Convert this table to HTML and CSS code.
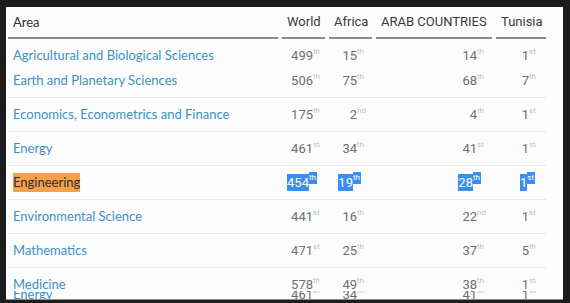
FILE: index.html
```html
<!DOCTYPE html>
<html>
<head>
<meta charset="utf-8">
<link rel="stylesheet" href="styles.css">
</head>
<body>
<div class="panel">
  <div class="row head">
    <div class="cell area">Area</div>
    <div class="cell">World</div>
    <div class="cell">Africa</div>
    <div class="cell">ARAB COUNTRIES</div>
    <div class="cell">Tunisia</div>
  </div>

  <div class="row">
    <div class="cell area"><a>Agricultural and Biological Sciences</a><a>Earth and Planetary Sciences</a></div>
    <div class="cell num c-w"><div>499<sup>th</sup></div><div>506<sup>th</sup></div></div>
    <div class="cell num c-a"><div>15<sup>th</sup></div><div>75<sup>th</sup></div></div>
    <div class="cell num c-r"><div>14<sup>th</sup></div><div>68<sup>th</sup></div></div>
    <div class="cell num c-t"><div>1<sup>st</sup></div><div>7<sup>th</sup></div></div>
  </div>

  <div class="row">
    <div class="cell area"><a>Economics, Econometrics and Finance</a></div>
    <div class="cell num c-w"><div>175<sup>th</sup></div></div>
    <div class="cell num c-a"><div>2<sup>nd</sup></div></div>
    <div class="cell num c-r"><div>4<sup>th</sup></div></div>
    <div class="cell num c-t"><div>1<sup>st</sup></div></div>
  </div>

  <div class="row">
    <div class="cell area"><a>Energy</a></div>
    <div class="cell num c-w"><div>461<sup>st</sup></div></div>
    <div class="cell num c-a"><div>34<sup>th</sup></div></div>
    <div class="cell num c-r"><div>41<sup>st</sup></div></div>
    <div class="cell num c-t"><div>1<sup>st</sup></div></div>
  </div>

  <div class="row">
    <div class="cell area"><a><mark class="hl-orange">Engineering</mark></a></div>
    <div class="cell num c-w"><div><span class="sel">454</span><sup class="sel">th</sup></div></div>
    <div class="cell num c-a"><div><span class="sel">19</span><sup class="sel">th</sup></div></div>
    <div class="cell num c-r"><div><span class="sel">28</span><sup class="sel">th</sup></div></div>
    <div class="cell num c-t"><div><span class="sel">1</span><sup class="sel">st</sup></div></div>
  </div>

  <div class="row">
    <div class="cell area"><a>Environmental Science</a></div>
    <div class="cell num c-w"><div>441<sup>st</sup></div></div>
    <div class="cell num c-a"><div>16<sup>th</sup></div></div>
    <div class="cell num c-r"><div>22<sup>nd</sup></div></div>
    <div class="cell num c-t"><div>1<sup>st</sup></div></div>
  </div>

  <div class="row">
    <div class="cell area"><a>Mathematics</a></div>
    <div class="cell num c-w"><div>471<sup>st</sup></div></div>
    <div class="cell num c-a"><div>25<sup>th</sup></div></div>
    <div class="cell num c-r"><div>37<sup>th</sup></div></div>
    <div class="cell num c-t"><div>5<sup>th</sup></div></div>
  </div>

  <div class="row last">
    <div class="cell area"><a class="front">Medicine</a><a class="ghost">Energy</a></div>
    <div class="cell num c-w"><div class="front">578<sup>th</sup></div><div class="ghost">461<sup>st</sup></div></div>
    <div class="cell num c-a"><div class="front">49<sup>th</sup></div><div class="ghost">34<sup>th</sup></div></div>
    <div class="cell num c-r"><div class="front">38<sup>th</sup></div><div class="ghost">41<sup>st</sup></div></div>
    <div class="cell num c-t"><div class="front">1<sup>st</sup></div><div class="ghost">1<sup>st</sup></div></div>
  </div>
</div>
</body>
</html>
```

FILE: styles.css
```css
html, body {
  margin: 0;
  padding: 0;
  background: #1d1d1d;
  width: 570px;
  height: 303px;
  overflow: hidden;
}

.panel {
  margin: 7px 7px 0 6px;
  height: 292px;
  border-bottom: 1px solid #8d8d8d;
  background: #fcfcfc;
  padding-left: 2px;
  overflow: hidden;
  font-family: Roboto, "Liberation Sans", sans-serif;
}

.row {
  display: grid;
  grid-template-columns: 270px 43px 43px 116px 50px;
  column-gap: 4px;
  width: 538px;
  padding: 4px 0;
  border-bottom: 1px solid #e8e8e8;
}

.row.head {
  padding: 0;
  border-bottom: none;
}

.row.head .cell {
  height: 30px;
  line-height: 30px;
  border-bottom: 2px solid #8c8c8c;
  padding-left: 5px;
  font-size: 13px;
  color: #3a3a3a;
  white-space: nowrap;
}

.row.head .cell.area {
  font-family: Lato, "Open Sans", sans-serif;
  color: #2e2e2e;
}

.cell.area {
  padding-left: 5px;
  display: flex;
  flex-direction: column;
}

.cell.area a {
  font-family: Lato, "Open Sans", sans-serif;
  font-size: 13px;
  line-height: 25px;
  color: #3b91c6;
  white-space: nowrap;
}

.hl-orange {
  background: #f5a04c;
  color: #2c2c2c;
  padding: 1px 0 2px;
}

.num {
  text-align: right;
  font-size: 13px;
  color: #6e6e6e;
  line-height: 25px;
}

.num sup {
  display: inline-block;
  width: 12px;
  text-align: left;
  font-size: 8px;
  line-height: 10px;
  vertical-align: 6px;
  color: #c2c2c2;
}

.c-w { padding-right: 0; }
.c-a { padding-right: 3px; }
.c-r { padding-right: 3px; }
.c-t { padding-right: 5px; }

.num span.sel {
  display: inline-block;
  background: #3a8ef0;
  color: #ffffff;
  line-height: 17px;
  vertical-align: 0;
}

.num sup.sel {
  background: #3a8ef0;
  color: #ffffff;
  width: auto;
  padding-right: 1px;
  line-height: 12px;
  vertical-align: 7px;
  margin-right: 8px;
}

.c-t sup.sel { margin-right: 6px; }

.row.last .front {
  position: relative;
  z-index: 1;
}

.row.last .ghost {
  margin-top: -15px;
  clip-path: inset(9px 0 0 0);
}
```
